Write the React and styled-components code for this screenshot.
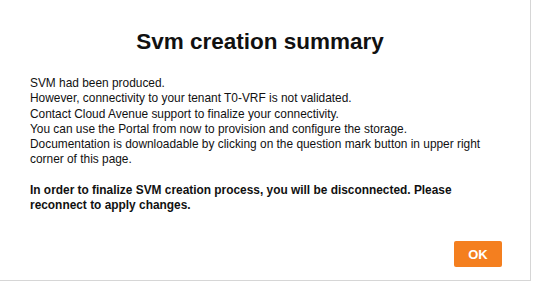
import React from "react";
import styled, { createGlobalStyle } from "styled-components";

const GlobalStyle = createGlobalStyle`
  body {
    margin: 0;
    background: #fff;
    font-family: "Liberation Sans", Arial, sans-serif;
  }
`;

const Page = styled.div`
  width: 536px;
  height: 283px;
  overflow: hidden;
`;

const Modal = styled.div`
  box-sizing: border-box;
  width: 531px;
  height: 281px;
  background: #fff;
  border-right: 1px solid #d6d6d6;
  border-bottom: 1px solid #d6d6d6;
  padding: 29px 28px 13px 30px;
  display: flex;
  flex-direction: column;
`;

const Title = styled.h1`
  margin: 0 0 21px;
  padding-right: 12px;
  text-align: center;
  font-size: 22.5px;
  font-weight: 700;
  color: #111;
  line-height: 26px;
`;

const Body = styled.div`
  font-size: 11.9px;
  line-height: 15.3px;
  color: #111;
  flex: 1;
`;

const Para = styled.p`
  margin: 0 0 15.3px;
  font-weight: ${(p) => (p.bold ? 700 : 400)};
`;

const Footer = styled.div`
  display: flex;
  justify-content: flex-end;
`;

const OkButton = styled.button`
  width: 48px;
  height: 26px;
  border: none;
  border-radius: 2px;
  background: #f47f1f;
  color: #fff;
  font-family: "Liberation Sans", Arial, sans-serif;
  font-size: 13px;
  font-weight: 700;
  padding: 0;
  cursor: pointer;
`;

const App = () => {
  return (
    <Page>
      <GlobalStyle />
      <Modal>
        <Title>Svm creation summary</Title>
        <Body>
          <Para>
            SVM had been produced.
            <br />
            However, connectivity to your tenant T0-VRF is not validated.
            <br />
            Contact Cloud Avenue support to finalize your connectivity.
            <br />
            You can use the Portal from now to provision and configure the storage.
            <br />
            Documentation is downloadable by clicking on the question mark button in upper right
            corner of this page.
          </Para>
          <Para bold>
            In order to finalize SVM creation process, you will be disconnected. Please
            reconnect to apply changes.
          </Para>
        </Body>
        <Footer>
          <OkButton>OK</OkButton>
        </Footer>
      </Modal>
    </Page>
  );
};

export default App;
